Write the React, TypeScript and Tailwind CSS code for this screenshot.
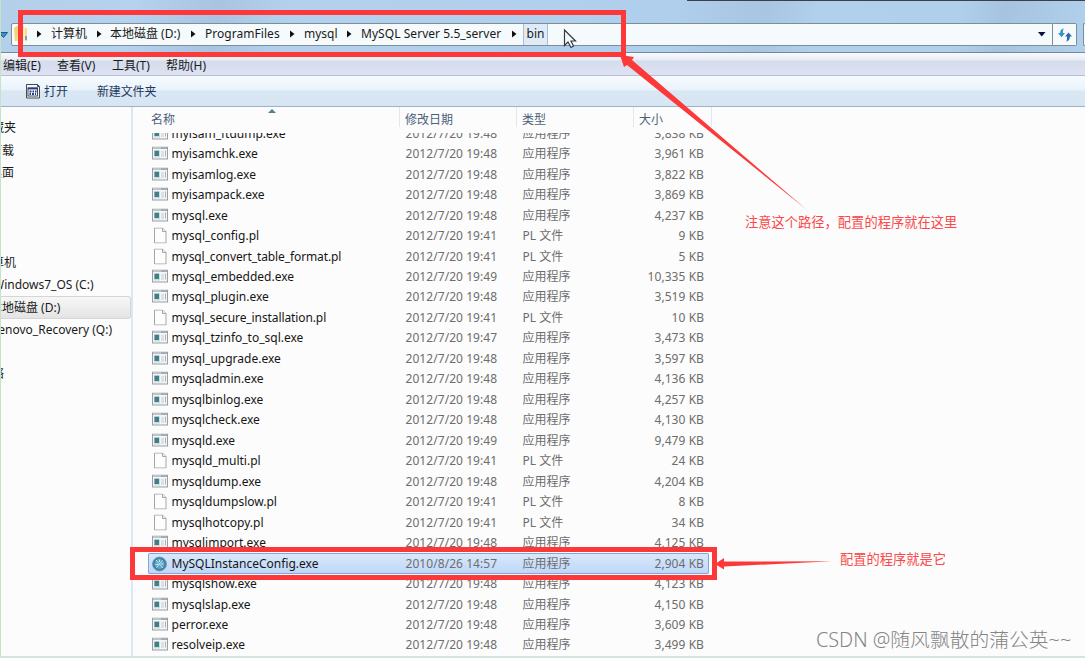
import React from "react";

type Kind = "exe" | "pl" | "cfg";
type FileRow = { name: string; date: string; kind: Kind; size: string };

const f = (name: string, date: string, size: string, kind: Kind = "exe"): FileRow => ({ name, date, kind, size });

const files: FileRow[] = [
  f("myisam_ftdump.exe", "2012/7/20 19:48", "3,838 KB"),
  f("myisamchk.exe", "2012/7/20 19:48", "3,961 KB"),
  f("myisamlog.exe", "2012/7/20 19:48", "3,822 KB"),
  f("myisampack.exe", "2012/7/20 19:48", "3,869 KB"),
  f("mysql.exe", "2012/7/20 19:48", "4,237 KB"),
  f("mysql_config.pl", "2012/7/20 19:41", "9 KB", "pl"),
  f("mysql_convert_table_format.pl", "2012/7/20 19:41", "5 KB", "pl"),
  f("mysql_embedded.exe", "2012/7/20 19:49", "10,335 KB"),
  f("mysql_plugin.exe", "2012/7/20 19:48", "3,519 KB"),
  f("mysql_secure_installation.pl", "2012/7/20 19:41", "10 KB", "pl"),
  f("mysql_tzinfo_to_sql.exe", "2012/7/20 19:47", "3,473 KB"),
  f("mysql_upgrade.exe", "2012/7/20 19:48", "3,597 KB"),
  f("mysqladmin.exe", "2012/7/20 19:48", "4,136 KB"),
  f("mysqlbinlog.exe", "2012/7/20 19:48", "4,257 KB"),
  f("mysqlcheck.exe", "2012/7/20 19:48", "4,130 KB"),
  f("mysqld.exe", "2012/7/20 19:49", "9,479 KB"),
  f("mysqld_multi.pl", "2012/7/20 19:41", "24 KB", "pl"),
  f("mysqldump.exe", "2012/7/20 19:48", "4,204 KB"),
  f("mysqldumpslow.pl", "2012/7/20 19:41", "8 KB", "pl"),
  f("mysqlhotcopy.pl", "2012/7/20 19:41", "34 KB", "pl"),
  f("mysqlimport.exe", "2012/7/20 19:48", "4,125 KB"),
  f("MySQLInstanceConfig.exe", "2010/8/26 14:57", "2,904 KB", "cfg"),
  f("mysqlshow.exe", "2012/7/20 19:48", "4,123 KB"),
  f("mysqlslap.exe", "2012/7/20 19:48", "4,150 KB"),
  f("perror.exe", "2012/7/20 19:48", "3,609 KB"),
  f("resolveip.exe", "2012/7/20 19:48", "3,499 KB"),
];

function ExeIcon() {
  return (
    <svg width="16" height="14" viewBox="0 0 16 14" className="block -translate-y-[0.5px]">
      <rect x="0.5" y="0.5" width="15" height="12" fill="#f3f5f6" stroke="#9a9fa4" />
      <rect x="1" y="1" width="14" height="1.500" fill="#bcc2c8" />
      <path d="M9.500 1.500h1M11.500 1.500h1M13.500 1.500h1" stroke="#5a636b" />
      <rect x="2" y="4" width="6" height="7" fill="#cfdbe0" />
      <rect x="2.5" y="4.2" width="4.5" height="5.300" fill="#3e8085" />
      <path d="M9 5.5h3M9 7.5h3M9 9.5h3" stroke="#c3ccd4" />
      <path d="M13.5 4v6" stroke="#aab2b9" />
    </svg>
  );
}

function PageIcon() {
  return (
    <svg width="16" height="16" viewBox="0 0 16 16" className="block translate-x-[0.5px] -translate-y-[0.5px]">
      <path d="M2 0.5h8l3.500 3.500v11.500H2z" fill="#fdfdfd" stroke="#a6a6a6" />
      <path d="M10 0.5v3.500h3.500" fill="#ececec" stroke="#a6a6a6" />
    </svg>
  );
}

function ConfigIcon() {
  return (
    <svg width="16" height="16" viewBox="0 0 16 16" className="block">
      <circle cx="7.5" cy="8" r="7" fill="#3b82aa" stroke="#7a9fb8" />
      <circle cx="7.5" cy="8" r="4.9" fill="#5fa5c8" />
      <path d="M4 4l7 8M10.500 4.500l-6 7M7.500 3.500v2.500M3.500 8.500h3M9 8h2.500" stroke="#c6e0ec" strokeWidth="1" fill="none" />
    </svg>
  );
}

function Crumb({ className }: { className: string }) {
  return (
    <span className={`flex shrink-0 items-center justify-center ${className}`}>
      <svg width="5" height="8" viewBox="0 0 5 8"><path d="M0 0.500L4.500 4L0 7.500z" fill="#111" /></svg>
    </span>
  );
}

function TopBar() {
  return (
    <div className="flex h-[53px] shrink-0 items-start border-b border-[#71899c] bg-[linear-gradient(100deg,#b4cfe9_0%,#b5d2ee_12%,#a9c4e0_20%,#b3d1ed_27%,#b0cfec_62%,#a8c5e1_70%,#b1d0ec_75%,#b0cfeb_88%,#a6c4df_92%,#b1d0ec_100%)] pt-[23px]">
      <span className="flex h-[23px] w-[11px] shrink-0 items-center pt-px">
        <svg width="8" height="6" viewBox="0 0 8 6"><path d="M0 0.500h7.500L3.500 5.500L0 2z" fill="#3d91c4" stroke="#1c5b88" /></svg>
      </span>
      <div className="flex h-[23px] w-[1042px] shrink-0 items-center rounded-l-[2px] border border-[#7d8d9a] bg-[#f5fafc] pb-px text-[12px] leading-[20px] text-[#1a1a1a]">
        <svg width="14" height="16" viewBox="0 0 14 16" className="ml-[2px] shrink-0">
          <path d="M0 2l3-2h6l1 2v13H1z" fill="#f2d36f" />
          <path d="M4 2h9v13H2z" fill="#f8dc87" />
          <path d="M9 2h2v13H9z" fill="#fff0b8" />
          <path d="M11 10h2v4h-2z" fill="#6da6cb" />
        </svg>
        <Crumb className="w-[23px]" />
        <span className="w-[37px] shrink-0 whitespace-nowrap">计算机</span>
        <Crumb className="w-[22px]" />
        <span className="w-[72px] shrink-0 whitespace-nowrap">本地磁盘 (D:)</span>
        <Crumb className="w-[23px]" />
        <span className="w-[75px] shrink-0 whitespace-nowrap tracking-[0.040px]">ProgramFiles</span>
        <Crumb className="w-[24px]" />
        <span className="w-[34px] shrink-0 whitespace-nowrap">mysql</span>
        <Crumb className="w-[23px]" />
        <span className="w-[142px] shrink-0 whitespace-nowrap tracking-[0.050px]">MySQL Server 5.5_server</span>
        <Crumb className="w-[20px] pl-[2px]" />
        <span className="flex h-[21px] w-[25px] shrink-0 items-center justify-center border-x border-[#a9bfd3] bg-[#dfebf7]">bin</span>
        <span className="flex-1" />
        <svg width="8" height="5" viewBox="0 0 8 5" className="mr-[6px]"><path d="M0 0h7.500L3.800 4.500z" fill="#0d0d45" /></svg>
      </div>
      <div className="flex h-[23px] w-[24px] shrink-0 items-center justify-center rounded-r-[2px] border border-l-0 border-[#7d8d9a] bg-[#f5fafc]">
        <svg width="14" height="14" viewBox="0 0 14 14">
          <path d="M5.800 0.500C2.800 1 2.200 3 2.200 5H0L3.500 9.200L7 5H5C4.800 3 5 1.800 5.800 0.500z" fill="#3395c5" />
          <path d="M8.200 13.500C11.200 13 11.800 11 11.800 8.500H14L10.500 4.500L7 8.500H9C9.200 11 9 12.200 8.200 13.500z" fill="#3265ae" />
        </svg>
      </div>
      <div className="ml-[6px] h-[23px] flex-1 rounded-l-[2px] border border-r-0 border-[#7d8d9a] bg-[#f5fafc]" />
    </div>
  );
}

function MenuBar() {
  return (
    <div className="flex h-[23px] shrink-0 items-center border-b border-[#b9bed6] bg-[linear-gradient(#f8fafc_0px,#e8ecf5_7px,#d5dcec_8px,#dde3f2_22px)] pl-[3px] pt-[3px] text-[12px] text-[#1c1c1c]">
      <span className="w-[54px] whitespace-nowrap">编辑(E)</span>
      <span className="w-[55px] whitespace-nowrap">查看(V)</span>
      <span className="w-[54px] whitespace-nowrap">工具(T)</span>
      <span className="whitespace-nowrap">帮助(H)</span>
    </div>
  );
}

function ToolBar() {
  return (
    <div className="flex h-[31px] shrink-0 items-center border-b border-[#9db1c8] bg-[linear-gradient(#f7fbff_0px,#e9f2fb_14px,#d9e6f3_15px,#d8e6f4_30px)] pl-[26px] text-[12px] text-[#1e395b]">
      <svg width="14" height="15" viewBox="0 0 14 15" className="mr-[4px] shrink-0">
        <path d="M0.500 0.500h11l2 2v11.500h-13z" fill="#f5f5f5" stroke="#444b52" />
        <path d="M11.500 0.500v2h2" fill="none" stroke="#444b52" />
        <rect x="2" y="4" width="9.500" height="8" fill="#fff" stroke="#444b52" strokeWidth="1" />
        <path d="M2 4.500h10" stroke="#243c88" strokeWidth="1.800" />
        <path d="M3.500 7.500h2M6.500 7.500h1.500M9 7.500h1.500M3.500 10h1.500M6 10h2M9 10h1" stroke="#243a88" strokeWidth="1.800" />
      </svg>
      <span className="w-[53px] whitespace-nowrap pt-[2px]">打开</span>
      <span className="whitespace-nowrap pt-[2px] tracking-[-0.150px]">新建文件夹</span>
    </div>
  );
}

function SideItem({ children, shift }: { children: string; shift: string }) {
  return (
    <div className="flex h-[22.500px] shrink-0 items-center overflow-hidden">
      <span className={`whitespace-nowrap ${shift}`}>{children}</span>
    </div>
  );
}

function Sidebar() {
  return (
    <div className="flex w-[133px] shrink-0 flex-col border-r-2 border-[#dce7f3] pt-[10px] text-[12px] text-[#1a1a1a]">
      <SideItem shift="-ml-[8px]">藏夹</SideItem>
      <SideItem shift="-ml-[10px]">下载</SideItem>
      <SideItem shift="-ml-[10px]">桌面</SideItem>
      <div className="h-[67px] shrink-0" />
      <SideItem shift="-ml-[8px]">算机</SideItem>
      <SideItem shift="-ml-[7px]">Windows7_OS (C:)</SideItem>
      <div className="-mt-px flex h-[23px] shrink-0 items-center overflow-hidden rounded-r-[3px] border border-l-0 border-[#d5d5d5] bg-[linear-gradient(#f7f7f7,#e4e4e4)]">
        <span className="-ml-[10px] whitespace-nowrap pt-px">本地磁盘 (D:)</span>
      </div>
      <SideItem shift="-ml-[8px]">Lenovo_Recovery (Q:)</SideItem>
      <div className="h-[22px] shrink-0" />
      <SideItem shift="-ml-[8px]">络</SideItem>
    </div>
  );
}

function Row({ file }: { file: FileRow }) {
  const selected = file.kind === "cfg";
  const long = file.name.length > 26;
  return (
    <div
      className={`ml-[15px] flex h-[20.480px] w-[561px] shrink-0 items-center text-[12px] leading-[20px] ${
        selected ? "rounded-[2px] bg-[linear-gradient(#dbe9fb,#bdd6f8)] shadow-[inset_0_0_0_1px_#84a6d4]" : ""
      }`}
    >
      <span className="ml-[3.500px] w-[20px] shrink-0">
        {file.kind === "exe" ? <ExeIcon /> : file.kind === "pl" ? <PageIcon /> : <ConfigIcon />}
      </span>
      <span className={`w-[234px] shrink-0 whitespace-nowrap text-[#161616] ${long ? "tracking-[-0.100px]" : ""}`}>{file.name}</span>
      <span className="w-[117px] shrink-0 whitespace-nowrap text-[#6d6d6d] tracking-[0.060px]">{file.date}</span>
      <span className="w-[90px] shrink-0 whitespace-nowrap text-[#6d6d6d]">{file.kind === "pl" ? "PL 文件" : "应用程序"}</span>
      <span className="w-[91.500px] shrink-0 whitespace-nowrap text-right text-[#6d6d6d] tracking-[0.060px]">{file.size}</span>
    </div>
  );
}

function HeaderCell({ children, className }: { children: string; className: string }) {
  return (
    <span className={`flex h-[20px] shrink-0 items-start border-l border-[#e0e8f0] pt-[6px] leading-[14px] ${className}`}>
      {children}
    </span>
  );
}

function FileList() {
  return (
    <div className="flex min-w-0 flex-1 flex-col">
      <div className="relative flex h-[26px] shrink-0 items-start text-[12px] text-[#4c607a]">
        <svg width="8" height="4" viewBox="0 0 8 4" className="absolute left-[135px] top-[2px]"><path d="M4 0L8 4H0z" fill="#4d8198" /></svg>
        <span className="w-[266px] pl-[18px] pt-[6px] leading-[14px]">名称</span>
        <HeaderCell className="w-[117px] pl-[5px]">修改日期</HeaderCell>
        <HeaderCell className="w-[117px] pl-[5px]">类型</HeaderCell>
        <HeaderCell className="w-[79px] border-r pl-[5px]">大小</HeaderCell>
      </div>
      <div className="min-h-0 flex-1 overflow-hidden">
        <div className="-mt-[9.500px] flex flex-col">
          {files.map((file) => <Row key={file.name} file={file} />)}
        </div>
      </div>
    </div>
  );
}

export default function App() {
  return (
    <div className="relative flex h-[658px] w-[1085px] flex-col overflow-hidden border-b-2 border-l border-b-[#d3e5de] border-l-[#c4e3c7] bg-[#fcfcfc] font-['Noto_Sans','Noto_Sans_CJK_SC',sans-serif]">
      <div className="-ml-px flex flex-col">
        <TopBar />
        <MenuBar />
        <ToolBar />
      </div>
      <div className="-ml-px flex min-h-0 flex-1">
        <Sidebar />
        <FileList />
      </div>
      <div className="absolute left-0 top-0 h-full w-px -translate-x-px bg-[#c4e3c7]" />
      <div className="absolute right-0 top-0 h-px w-[398px] bg-[#3c4148]" />
      <div className="absolute left-[17px] top-[10px] h-[47px] w-[608px] border-[5px] border-[#fd3838]" />
      <div className="absolute left-[129px] top-[547px] h-[33px] w-[587px] border-[5px] border-[#fd3838]" />
      <svg width="1085" height="658" viewBox="0 0 1085 658" className="pointer-events-none absolute -left-px top-0">
        <path d="M620 55L634 57L632 60L807 210L627 65L624 67z" fill="#fd3838" />
        <path d="M715 564L724 558L724 561.500L832 561.300L724 566.500L724 569.500z" fill="#fd3838" />
        <path d="M564.500 30V45.500L568 42L571 47.500L573.500 46L571 41H575.500z" fill="#f7fafc" stroke="#333b42" strokeWidth="1.200" />
      </svg>
      <span className="absolute left-[744px] top-[212px] whitespace-nowrap text-[13.270px] leading-[20px] text-[#fb4848]">注意这个路径，配置的程序就在这里</span>
      <span className="absolute left-[839px] top-[549px] whitespace-nowrap text-[13.270px] leading-[20px] text-[#fb4848]">配置的程序就是它</span>
      <span className="absolute left-[815px] top-[626px] whitespace-nowrap text-[19.800px] font-light leading-[28px] text-[#858585]">CSDN @随风飘散的蒲公英~~</span>
    </div>
  );
}
